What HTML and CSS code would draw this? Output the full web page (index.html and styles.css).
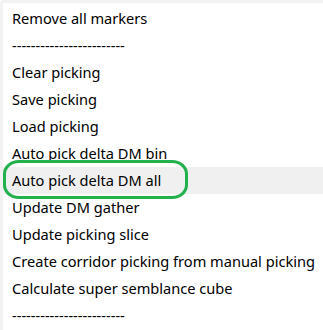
FILE: index.html
```html
<!DOCTYPE html>
<html lang="en">
<head>
  <meta charset="UTF-8">
  <title>Picking menu</title>
  <link rel="stylesheet" href="styles.css">
</head>
<body>
  <ul class="menu">
    <li class="menu-item">Remove all markers</li>
    <li class="menu-item">------------------------</li>
    <li class="menu-item">Clear picking</li>
    <li class="menu-item">Save picking</li>
    <li class="menu-item">Load picking</li>
    <li class="menu-item">Auto pick delta DM bin</li>
    <li class="menu-item hover">Auto pick delta DM all<span class="mark"></span></li>
    <li class="menu-item">Update DM gather</li>
    <li class="menu-item">Update picking slice</li>
    <li class="menu-item">Create corridor picking from manual picking</li>
    <li class="menu-item">Calculate super semblance cube</li>
    <li class="menu-item">------------------------</li>
  </ul>
</body>
</html>
```

FILE: styles.css
```css
body {
  margin: 0;
  background-color: #ffffff;
  font-family: "Noto Sans", "Open Sans", sans-serif;
  font-size: 14.6px;
  color: #000000;
}

.menu {
  list-style: none;
  margin: 0;
  padding: 2px 0 0 0;
  border-left: 3px solid #f2f2f2;
  border-top: 3px solid #f2f2f2;
  border-top-left-radius: 4px;
  height: 330px;
  box-sizing: border-box;
}

.menu-item {
  position: relative;
  height: 27px;
  line-height: 27px;
  padding-left: 9px;
  white-space: nowrap;
}

.menu-item.hover {
  background-color: #f0f0f0;
}

/* hand-drawn highlight round the hovered item */
.mark {
  position: absolute;
  left: 0;
  top: -7px;
  width: 185px;
  height: 39px;
  border: 3.5px solid #22b14c;
  border-radius: 16px / 14px;
  box-sizing: border-box;
}
```
